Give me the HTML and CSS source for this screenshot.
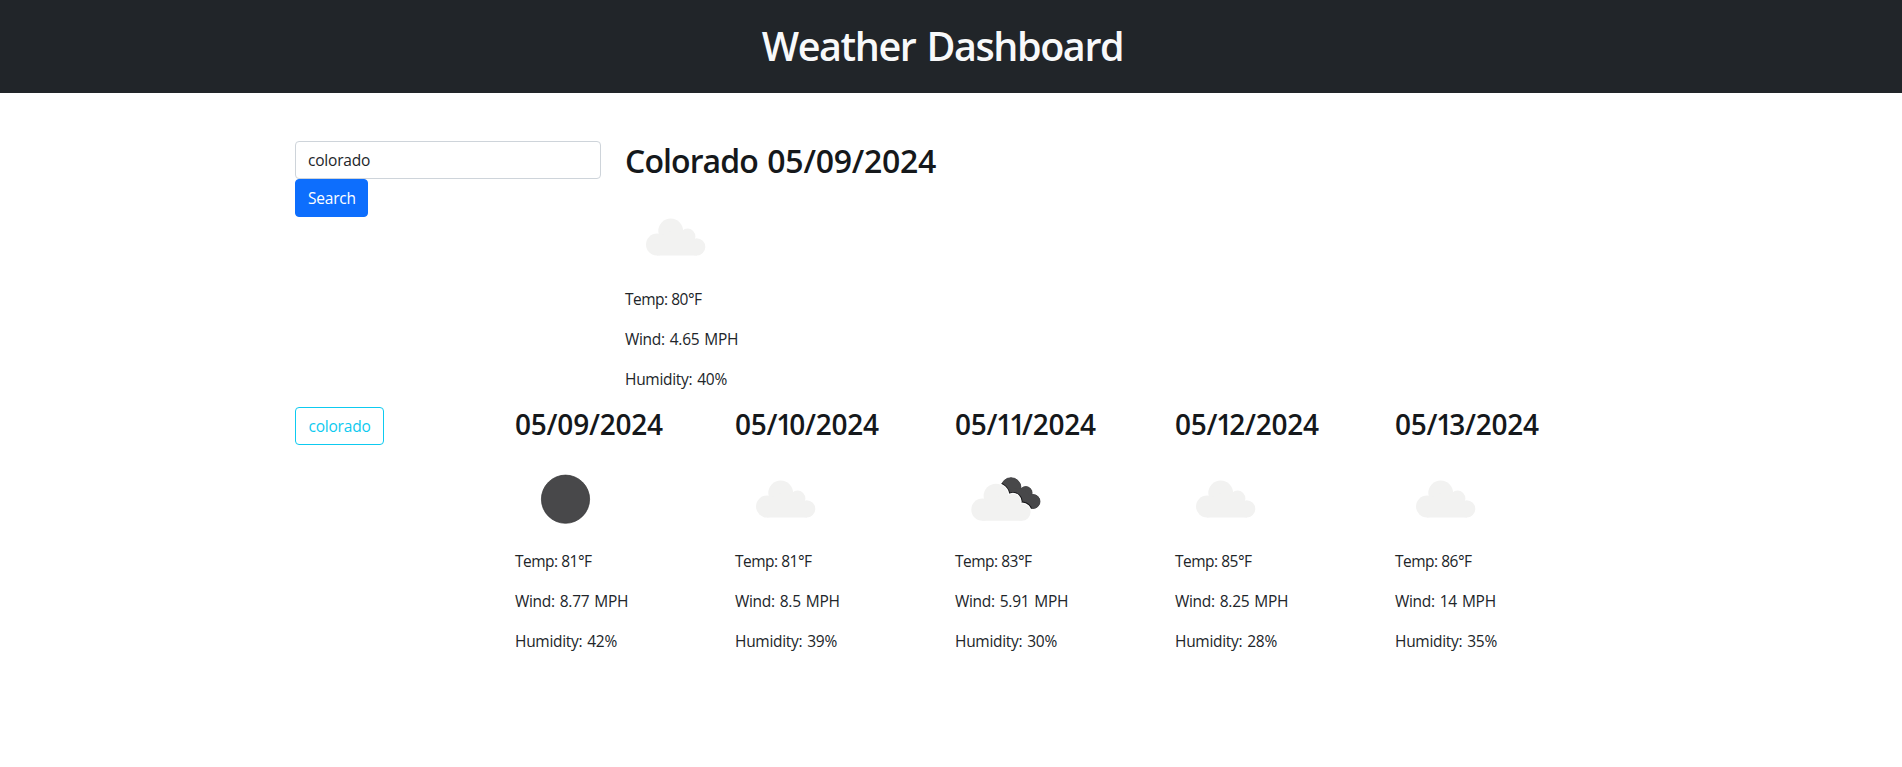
FILE: index.html
```html
<!DOCTYPE html>
<html lang="en">
<head>
<meta charset="utf-8">
<title>Weather Dashboard</title>
<link rel="stylesheet" href="styles.css">
</head>
<body>
<svg class="defs" aria-hidden="true">
  <defs>
    <g id="cloud-shape">
      <circle cx="45.7" cy="43.9" r="12.4"/>
      <circle cx="32.1" cy="57.5" r="11.1"/>
      <circle cx="62.6" cy="49.4" r="7.8"/>
      <circle cx="71.6" cy="59.9" r="8.7"/>
      <path d="M32 68.6H72V56L62 49L46 44L32 50Z"/>
    </g>
    <g id="back-shape">
      <circle cx="56" cy="38.7" r="10"/>
      <circle cx="70.8" cy="43.9" r="6.3"/>
      <circle cx="78" cy="52.5" r="7"/>
      <path d="M54 38L70 41L79 52L76 59L60 54Z"/>
    </g>
    <clipPath id="back-clip">
      <circle cx="56" cy="38.7" r="10.2"/>
      <circle cx="70.8" cy="43.9" r="6.5"/>
      <circle cx="78" cy="52.5" r="7.2"/>
      <path d="M54 38L70 41L79 52L76 59L60 54Z"/>
    </clipPath>
    <symbol id="cloud" viewBox="0 0 100 100"><use href="#cloud-shape" fill="#f2f2f1"/></symbol>
    <symbol id="moon" viewBox="0 0 100 100"><circle cx="50.5" cy="50.2" r="24.1" fill="#48484a" stroke="#303032" stroke-width=".7"/></symbol>
    <symbol id="broken" viewBox="0 0 100 100">
      <use href="#back-shape" fill="#48484a" stroke="#242426" stroke-width=".7"/>
      <use href="#back-shape" fill="#48484a"/>
      <g clip-path="url(#back-clip)">
        <use href="#cloud-shape" x="-4.7" y="3.2" fill="#161618" stroke="#161618" stroke-width="3.8"/>
      </g>
      <use href="#cloud-shape" x="-4.7" y="3.2" fill="#fff" stroke="#fff" stroke-width="2"/>
      <use href="#cloud-shape" x="-4.7" y="3.2" fill="#f2f2f1"/>
    </symbol>
  </defs>
</svg>
<header class="header"><h1>Weather Dashboard</h1></header>
<main class="container">
  <section class="row">
    <form class="search">
      <input class="form-control" type="text" value="colorado" aria-label="City">
      <button class="btn btn-primary" type="button">Search</button>
    </form>
    <div class="current">
      <h2>Colorado <span class="date">05/09/2024</span></h2>
      <svg class="icon"><use href="#cloud"/></svg>
      <p>Temp: 80°F</p><p>Wind: 4.65 MPH</p><p>Humidity: 40%</p>
    </div>
  </section>
  <section class="row">
    <div class="col"><button class="btn btn-outline" type="button">colorado</button></div>
    <div class="col"><h3>05/09/2024</h3><svg class="icon"><use href="#moon"/></svg><p>Temp: 81°F</p><p>Wind: 8.77 MPH</p><p>Humidity: 42%</p></div>
    <div class="col"><h3>05/<span class="one">1</span>0/2024</h3><svg class="icon"><use href="#cloud"/></svg><p>Temp: 81°F</p><p>Wind: 8.5 MPH</p><p>Humidity: 39%</p></div>
    <div class="col"><h3>05/<span class="one">11</span>/2024</h3><svg class="icon"><use href="#broken"/></svg><p>Temp: 83°F</p><p>Wind: 5.91 MPH</p><p>Humidity: 30%</p></div>
    <div class="col"><h3>05/<span class="one">1</span>2/2024</h3><svg class="icon"><use href="#cloud"/></svg><p>Temp: 85°F</p><p>Wind: 8.25 MPH</p><p>Humidity: 28%</p></div>
    <div class="col"><h3>05/<span class="one">1</span>3/2024</h3><svg class="icon"><use href="#cloud"/></svg><p>Temp: 86°F</p><p>Wind: 14 MPH</p><p>Humidity: 35%</p></div>
  </section>
</main>
</body>
</html>
```

FILE: styles.css
```css
* { box-sizing: border-box; }
body {
  margin: 0;
  background: #fff;
  color: #212529;
  font: 400 16px/1.5 "Segoe UI", "Open Sans", sans-serif;
  overflow: hidden;
}
.defs { display: block; width: 0; height: 0; }
.header {
  height: 93px;
  padding: 22px 17px 0 0;
  background: #212529;
  color: #f8f9fa;
  text-align: center;
}
h1, h2, h3 { margin: 0; font-weight: 600; line-height: 1.2; white-space: nowrap; }
h1 { font-size: 39.5px; line-height: 48px; letter-spacing: -1.4px; word-spacing: 2px; }
h2, h3 { padding-top: 1px; color: #15181b; }
h2 { margin-bottom: 6.6px; font-size: 32px; letter-spacing: -0.9px; word-spacing: 2px; }
h3 { margin-bottom: 7px; font-size: 28px; letter-spacing: -0.2px; }
.date { letter-spacing: -0.25px; }
.one { margin-left: -1px; letter-spacing: -3.2px; }
.container { width: 1320px; margin: 48px 0 0 283px; }
.row { display: flex; }
.search { width: 330px; padding: 0 12px; }
.current { flex: 1; padding: 0 12px; }
.col { width: 220px; padding: 0 12px; }
.icon { display: block; width: 100px; height: 100px; }
p { margin: 0 0 16px; font-size: 15.5px; line-height: 24px; letter-spacing: -0.3px; word-spacing: 1.3px; }
.icon + p { letter-spacing: -0.5px; word-spacing: 0; }
.form-control {
  display: block;
  width: 100%;
  height: 38px;
  padding: 6px 12px;
  border: 1px solid #ced4da;
  border-radius: 4px;
  background: #fff;
  color: #212529;
  font: inherit;
  font-size: 15.5px;
  letter-spacing: -0.2px;
}
.btn {
  display: block;
  height: 38px;
  padding: 6px 12px;
  border: 1px solid transparent;
  border-radius: 4px;
  font: inherit;
  font-size: 15.5px;
  line-height: 24px;
  letter-spacing: -0.2px;
}
.btn-primary { width: 73px; background: #0d6efd; border-color: #0d6efd; color: #fff; }
.btn-outline { width: 89px; background: transparent; border-color: #0dcaf0; color: #0dcaf0; }
```
